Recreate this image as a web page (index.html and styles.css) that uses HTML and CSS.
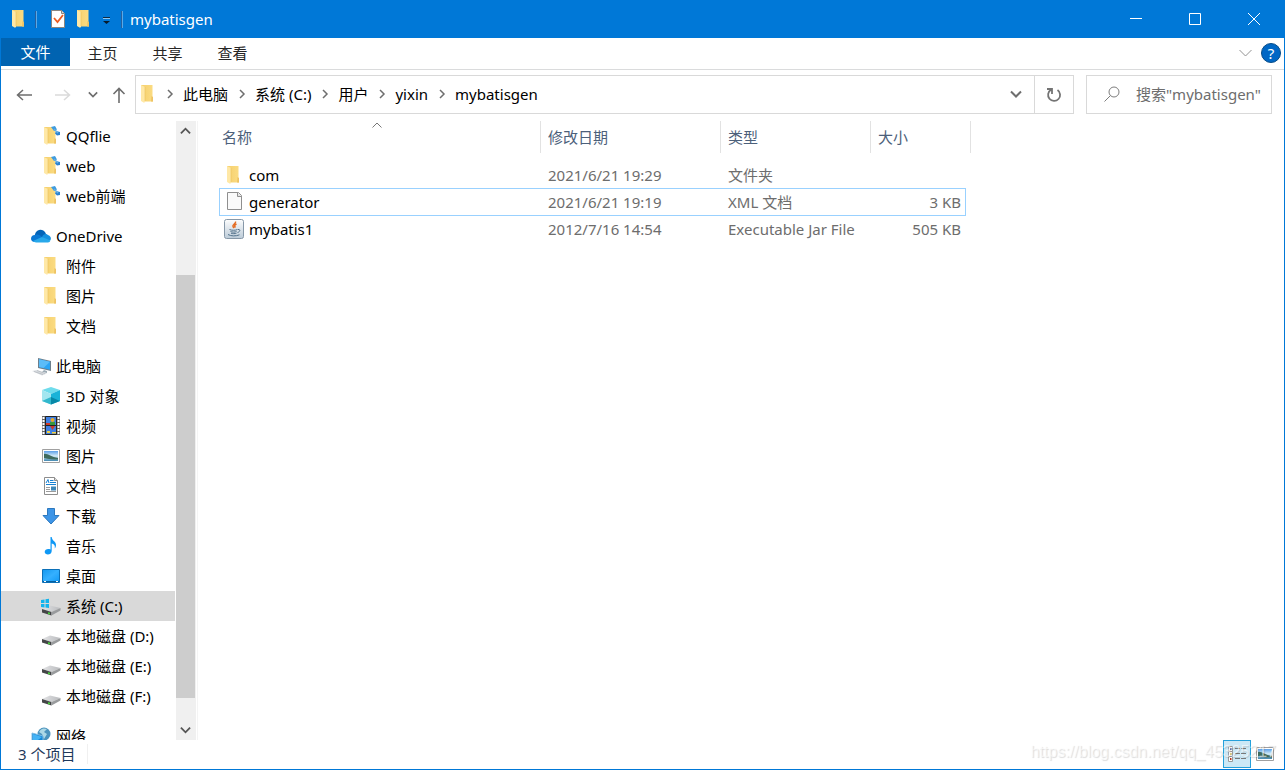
FILE: index.html
```
<!DOCTYPE html>
<html lang="zh-CN">
<head>
<meta charset="utf-8">
<title>mybatisgen</title>
<link rel="stylesheet" href="styles.css">
</head>
<body>
<svg class="sprite" width="0" height="0" aria-hidden="true">
  <defs>
    <linearGradient id="gold" x1="0" x2="1"><stop offset="0" stop-color="#f5cf6c"/><stop offset="1" stop-color="#fbdc83"/></linearGradient>
    <linearGradient id="sea" x1="0" y1="0" x2="0" y2="1"><stop offset="0" stop-color="#5b9fe8"/><stop offset=".5" stop-color="#d5ecf7"/><stop offset="1" stop-color="#3f86b0"/></linearGradient>
    <linearGradient id="drv" x1="0" x2="1"><stop offset="0" stop-color="#e4e4e6"/><stop offset="1" stop-color="#b9bbbe"/></linearGradient>
    <linearGradient id="scr" x1="0" y1="0" x2="1" y2="1"><stop offset="0" stop-color="#1297ee"/><stop offset=".5" stop-color="#35b0ff"/><stop offset="1" stop-color="#0f98f5"/></linearGradient>
    <linearGradient id="jarbg" x1="0" y1="0" x2="0" y2="1"><stop offset="0" stop-color="#fdfdfd"/><stop offset="1" stop-color="#bccbd8"/></linearGradient>
  </defs>
  <symbol id="folder" viewBox="0 0 20 20">
    <path d="M3 1h11.500v12l.5 1v3.500H6z" fill="url(#gold)"/><path d="M13.500 12l1.500 1v4.500h-2z" fill="#eec364"/>
    <path d="M3 1l4 2v15l-1 .800L3 17z" fill="#ffe8a6"/><path d="M7 3v14" stroke="#e9bf5c" stroke-width=".6"/>
  </symbol>
  <symbol id="synced" viewBox="0 0 20 20">
    <use href="#folder"/>
    <path d="M10 1l4-1 2 3.500-3 1.500z" fill="#3d9be0"/><path d="M15 5l4 1v3l-3 .500-2-2z" fill="#2c82cf"/><path d="M13 3l4 4" stroke="#67aee4" stroke-width="1.500"/>
  </symbol>
  <symbol id="cloud" viewBox="0 0 20 20">
    <path d="M4 11a5.500 5.500 0 0 1 11-3l3 4-9 3z" fill="#0364b8"/>
    <path d="M0 13a4 4 0 0 1 4-4c3-1 5 0 7 2l-3 5H4a4 3.500 0 0 1-4-3z" fill="#0a78d4"/>
    <path d="M11 11c1-3 4-4 6-2a3.500 3.500 0 0 1 2.500 5l-4 1z" fill="#1490df"/>
    <path d="M2 15l9-4 8.500 3.500A3 3 0 0 1 17 16.500H5a4 4 0 0 1-3-1.500z" fill="#28a8ea"/>
  </symbol>
  <symbol id="pc" viewBox="0 0 20 20">
    <path d="M7 2l13 3v10L7 12z" fill="#6d7f8c"/><path d="M8 3.300l11 2.500v7.900L8 11z" fill="#2ba4f4"/><path d="M8 3.300l11 2.500-6.500 6.300L8 11z" fill="#5bbcf8"/>
    <path d="M13 14l3 1v2l-5-1z" fill="#9dabb5"/><path d="M1 15l5-1 10 3.500-5 2z" fill="#d9dde1"/><path d="M3 15.500l9 3M6 14.500l8 3" stroke="#a7adb3" stroke-width=".6"/>
  </symbol>
  <symbol id="cube" viewBox="0 0 20 20">
    <path d="M1 4l9-3 9 3-9 4z" fill="#6fdcec"/><path d="M1 4l9 4v10.500l-9-3.500z" fill="#a3e6ef"/><path d="M10 8l9-4v11l-9 3.500z" fill="#1ab3d8"/><path d="M1 15l9-4v7.500z" fill="#32b8cd"/><path d="M10 11l9 4-9 3.500z" fill="#0788a7"/>
  </symbol>
  <symbol id="film" viewBox="0 0 20 20">
    <path d="M1 0h18v19H1z" fill="#666"/><path d="M4.500.5h11v9h-11zM4.500 9.500h11v9h-11z" fill="#3f80e2" stroke="#222"/>
    <path d="M2.500 1v18M17.500 1v18" stroke="#fff" stroke-width="2" stroke-dasharray="2 1"/>
    <path d="M5 7h5v2H5z" fill="#d33a25"/><circle cx="11.500" cy="4" r="2" fill="#e8a82b"/><path d="M9 6h5v3H9z" fill="#38983c"/><path d="M9 10h5l-2.500 4z" fill="#c9392b"/><path d="M6 15h3v2H6zM11 16h4v1.500h-4z" fill="#f2ce40"/>
  </symbol>
  <symbol id="photo" viewBox="0 0 20 20">
    <path d="M1.500 3.500h17v13h-17z" fill="#fff" stroke="#a0a0a0"/><path d="M3 5h14v10H3z" fill="url(#sea)"/><path d="M3 8c3-1 7 3 14 4v1.500c-5 0-9-.5-14-1.500z" fill="#3f6b5e"/>
  </symbol>
  <symbol id="doc" viewBox="0 0 20 20">
    <path d="M3.500 1.500h10l3 3v14h-13z" fill="#fff" stroke="#8d8d8d"/><path d="M13.500 1.500v3h3" fill="#ddd" stroke="#8d8d8d"/>
    <path d="M5 7l2-3.500L8 7M9 4.500h3.500M9 6.500h6M5 8.500h10" stroke="#1781d3" fill="none"/><path d="M5 11.500h4M5 13.500h4M5 15.500h10" stroke="#9b9b9b"/><path d="M10 10.500h5v4h-5z" fill="#3f87b7"/>
  </symbol>
  <symbol id="down" viewBox="0 0 20 20"><path d="M6.500 2.500h7v7h4.500L10 18 2 9.500h4.500z" fill="#3d95e7" stroke="#2c78be"/></symbol>
  <symbol id="music" viewBox="0 0 20 20"><path d="M9.500 1h1.200c.3 4 4.800 4.500 4.300 8.500-.2 1.500-.8 2.500-1.300 3 .8-3-.8-4.500-3-5V15c0 4.500-7 4.500-7 1 0-2.500 3-3.500 5.800-2.500z" fill="#0f98f5"/></symbol>
  <symbol id="desk" viewBox="0 0 20 20"><path d="M1.500 3.500h17v13h-17z" fill="url(#scr)" stroke="#0c70b8"/><path d="M2 15.500h16" stroke="#05609f"/><path d="M3 15.500h2M15 15.500h2" stroke="#fff"/></symbol>
  <symbol id="drive" viewBox="0 0 20 20">
    <path d="M1 13l8-3.500L19.500 12l-9 4z" fill="url(#drv)"/><path d="M1 13l9.500 3v3.500L1 16.500z" fill="#454648"/><path d="M10.500 16l9-4v2.500l-9 5z" fill="#999b9d"/><path d="M7 16.200l2 .6v1.700l-2-.6z" fill="#48d53b"/>
  </symbol>
  <symbol id="sysdrive" viewBox="0 0 20 20"><use href="#drive"/><path d="M0 4l3.500-.5V7H0zM4.500 3.300L8 2.800V7H4.500zM0 8h3.500v3.500L0 11zM4.500 8H8v4l-3.500-.5z" fill="#12b4ed"/></symbol>
  <symbol id="net" viewBox="0 0 20 20">
    <circle cx="13" cy="8" r="6.500" fill="#4b93bd"/><path d="M8 6c3-5 6-3 8-3l-3 3 3 2-3 5-2-5z" fill="#acd8e6"/>
    <path d="M1 7l11 3v9L1 16z" fill="#1688d6" stroke="#7cbbe4"/><path d="M2 8l9 3-7 5-2-.500z" fill="#45b3f5"/>
  </symbol>
  <symbol id="blank" viewBox="0 0 20 20"><path d="M3.500.5h11l3 3v14h-14z" fill="#fafafa" stroke="#8f8f8f"/><path d="M13.500.5v4h4" fill="#e4e4e4" stroke="#8f8f8f"/></symbol>
  <symbol id="jar" viewBox="0 0 20 20">
    <rect x=".5" y=".5" width="19" height="19" rx="2" fill="url(#jarbg)" stroke="#8798a8"/>
    <path d="M11.500 2.500c1 2-3.500 3-2.500 5l1 1.500M12.500 5c-2 1-2.500 2-1 3.500" fill="none" stroke="#e46c22" stroke-width="1.500"/>
    <path d="M5.500 10.500c2 1 6 1 8 0M6.500 12.500c1.500.8 4.500.8 6 0M7 14.200c1.500.6 4 .6 5.500 0M4 15.500c3 1.800 8 1.800 11.500.3M14 10.500c3-.5 2 2.500-.5 3" fill="none" stroke="#54738c"/>
  </symbol>
  <symbol id="chev-r" viewBox="0 0 8 10"><path d="M2 1l4 4-4 4" fill="none" stroke="currentColor" stroke-width="1.500"/></symbol>
  <symbol id="chev-d" viewBox="0 0 12 8"><path d="M1 1.500l5 5 5-5" fill="none" stroke="currentColor" stroke-width="2"/></symbol>
</svg>

<div class="window">
  <header class="titlebar">
    <svg class="icon"><use href="#folder"/></svg>
    <span class="divider"></span>
    <button class="quick first" aria-label="属性"><svg class="icon" viewBox="0 0 20 20"><path d="M3.500 1.500h10l3 3v14h-13z" fill="#fff" stroke="#8b8580"/><path d="M13.500 1.500v3h3" fill="#ddd" stroke="#8b8580"/><path d="M6 9l3.500 4 5.500-7" fill="none" stroke="#ee5b20" stroke-width="1.800"/></svg></button>
    <button class="quick" aria-label="新建文件夹"><svg class="icon"><use href="#folder"/></svg></button>
    <button class="quick more" aria-label="自定义快速访问工具栏"><svg width="9" height="8" viewBox="0 0 9 8"><path d="M1 .5h7" stroke="#102a40"/><path d="M1 1.500h7" stroke="#8fc5f0"/><path d="M1 4h7L4.500 7z" fill="#071a2a"/></svg></button>
    <span class="divider"></span>
    <h1 class="title">mybatisgen</h1>
    <div class="controls">
      <button aria-label="最小化"><svg width="12" height="12"><path d="M0 5.500h12" stroke="#fff"/></svg></button>
      <button aria-label="最大化"><svg width="12" height="12"><path d="M.5.5h11v11H.5z" fill="none" stroke="#fff"/></svg></button>
      <button aria-label="关闭"><svg width="12" height="12"><path d="M0 0l12 12M12 0L0 12" stroke="#fff"/></svg></button>
    </div>
  </header>

  <div class="ribbon">
    <button class="tab file">文件</button>
    <button class="tab">主页</button>
    <button class="tab">共享</button>
    <button class="tab">查看</button>
    <button class="expand" aria-label="展开功能区"><svg width="13" height="8"><path d="M.5 1l6 6 6-6" fill="none" stroke="#929292"/></svg></button>
    <button class="help" aria-label="帮助">?</button>
  </div>

  <div class="toolbar">
    <button class="move" aria-label="后退"><svg width="16" height="12"><path d="M7 1L1.500 6 7 11M2 6h14" fill="none" stroke="#6e6e6e" stroke-width="1.500"/></svg></button>
    <button class="move" aria-label="前进"><svg width="16" height="12"><path d="M9 1l5.500 5L9 11M14 6H0" fill="none" stroke="#dadada" stroke-width="1.500"/></svg></button>
    <button class="recent" aria-label="最近浏览的位置"><svg width="10" height="7"><use href="#chev-d"/></svg></button>
    <button class="up" aria-label="上移"><svg width="14" height="16"><path d="M1.500 7L7 1.500 12.500 7M7 2v14" fill="none" stroke="#6e6e6e" stroke-width="1.600"/></svg></button>
    <div class="address">
      <svg class="icon"><use href="#folder"/></svg>
      <svg class="sep first"><use href="#chev-r"/></svg><button>此电脑</button>
      <svg class="sep"><use href="#chev-r"/></svg><button>系统 (C:)</button>
      <svg class="sep"><use href="#chev-r"/></svg><button>用户</button>
      <svg class="sep"><use href="#chev-r"/></svg><button>yixin</button>
      <svg class="sep"><use href="#chev-r"/></svg><button>mybatisgen</button>
      <button class="drop" aria-label="以前的位置"><svg width="12" height="8"><use href="#chev-d"/></svg></button>
      <button class="refresh" aria-label="刷新"><svg width="16" height="16"><path d="M5 2.800A6 6 0 1 0 11.500 3M1 2h5v5" fill="none" stroke="#747474" stroke-width="1.800"/></svg></button>
    </div>
    <label class="search">
      <svg width="16" height="16"><circle cx="10" cy="6" r="5" fill="none" stroke="#7d7d7d"/><path d="M6.500 9.500L.5 15.500" stroke="#7d7d7d"/></svg>
      <input type="text" aria-label="搜索" placeholder='搜索"mybatisgen"'>
    </label>
  </div>

  <div class="body">
    <nav class="tree">
      <ul>
        <li><a href="#"><svg class="icon"><use href="#synced"/></svg>QQflie</a></li>
        <li><a href="#"><svg class="icon"><use href="#synced"/></svg>web</a></li>
        <li><a href="#"><svg class="icon"><use href="#synced"/></svg>web前端</a></li>
      </ul>
      <ul>
        <li><a href="#" class="root"><svg class="icon"><use href="#cloud"/></svg>OneDrive</a></li>
        <li><a href="#"><svg class="icon"><use href="#folder"/></svg>附件</a></li>
        <li><a href="#"><svg class="icon"><use href="#folder"/></svg>图片</a></li>
        <li><a href="#"><svg class="icon"><use href="#folder"/></svg>文档</a></li>
      </ul>
      <ul>
        <li><a href="#" class="root"><svg class="icon"><use href="#pc"/></svg>此电脑</a></li>
        <li><a href="#"><svg class="icon"><use href="#cube"/></svg>3D 对象</a></li>
        <li><a href="#"><svg class="icon"><use href="#film"/></svg>视频</a></li>
        <li><a href="#"><svg class="icon"><use href="#photo"/></svg>图片</a></li>
        <li><a href="#"><svg class="icon"><use href="#doc"/></svg>文档</a></li>
        <li><a href="#"><svg class="icon"><use href="#down"/></svg>下载</a></li>
        <li><a href="#"><svg class="icon"><use href="#music"/></svg>音乐</a></li>
        <li><a href="#"><svg class="icon"><use href="#desk"/></svg>桌面</a></li>
        <li><a href="#" class="current"><svg class="icon"><use href="#sysdrive"/></svg>系统 (C:)</a></li>
        <li><a href="#"><svg class="icon"><use href="#drive"/></svg>本地磁盘 (D:)</a></li>
        <li><a href="#"><svg class="icon"><use href="#drive"/></svg>本地磁盘 (E:)</a></li>
        <li><a href="#"><svg class="icon"><use href="#drive"/></svg>本地磁盘 (F:)</a></li>
      </ul>
      <ul>
        <li><a href="#" class="root"><svg class="icon"><use href="#net"/></svg>网络</a></li>
      </ul>
    </nav>
    <div class="scrollbar">
      <button aria-label="向上滚动"><svg class="flip" width="11" height="8"><use href="#chev-d"/></svg></button>
      <div class="track"><div class="thumb"></div></div>
      <button aria-label="向下滚动"><svg width="11" height="8"><use href="#chev-d"/></svg></button>
    </div>
    <main class="files">
      <table>
        <colgroup><col class="c-name"><col class="c-date"><col class="c-type"><col class="c-size"><col class="c-end"></colgroup>
        <thead>
          <tr>
            <th class="sorted">名称<svg class="sort" width="10" height="6"><path d="M.5 5.500L5 1l4.500 4.500" fill="none" stroke="#777"/></svg></th>
            <th>修改日期</th><th>类型</th><th colspan="2">大小</th>
          </tr>
        </thead>
        <tbody>
          <tr><td><span class="name"><svg class="icon"><use href="#folder"/></svg>com</span></td><td>2021/6/21 19:29</td><td>文件夹</td><td></td></tr>
          <tr class="focused"><td><span class="name"><svg class="icon"><use href="#blank"/></svg>generator</span></td><td>2021/6/21 19:19</td><td>XML 文档</td><td>3 KB</td></tr>
          <tr class="plain"><td><span class="name"><svg class="icon"><use href="#jar"/></svg>mybatis1</span></td><td>2012/7/16 14:54</td><td>Executable Jar File</td><td>505 KB</td></tr>
        </tbody>
      </table>
    </main>
  </div>

  <footer class="status">
    <span class="count">3 个项目</span>
    <button class="view on" aria-label="详细信息"><svg width="20" height="20" viewBox="0 0 20 20"><path d="M1.500 2.500h4v5h-4zM1.500 7.500h4v5h-4zM1.500 12.500h4v5h-4z" fill="#fff" stroke="#999"/><path d="M3 4h1.500v2H3z" fill="#346bb5"/><path d="M3 9h1.500v2H3z" fill="#c8b75a"/><path d="M3 14h1.500v2H3z" fill="#b93920"/><path d="M8 4.500h5M14 4.500h5M8 9.500h5M14 9.500h5M8 14.500h5M14 14.500h5" stroke="#7a7a7a"/></svg></button>
    <button class="view" aria-label="大图标"><svg class="icon"><use href="#photo"/></svg></button>
    <span class="watermark">https://blog.csdn.net/qq_45325217</span>
  </footer>
</div>
</body>
</html>
```
FILE: styles.css
```
* { box-sizing: border-box; }
body {
  margin: 0;
  font: 15px/20px "Noto Sans", "Noto Sans CJK SC", sans-serif;
  color: #000;
  background: #fff;
}
button, input { font: inherit; color: inherit; border: 0; padding: 0; margin: 0; background: none; }
button { display: flex; align-items: center; justify-content: center; }
ul { list-style: none; margin: 0; padding: 0; }
svg { flex: none; display: block; }
.sprite { position: absolute; }
.icon { width: 20px; height: 20px; }

.window {
  height: 100vh;
  display: flex;
  flex-direction: column;
  border: 1px solid #0078d7;
  border-top: 0;
  overflow: hidden;
}

.titlebar {
  flex: none;
  height: 38px;
  display: flex;
  align-items: center;
  padding-left: 8px;
  background: #0078d7;
  color: #fff;
}
.divider { width: 2px; height: 17px; margin: 0 6px; background: #2560a0; border-right: 1px solid #5ba9e6; }
.quick { width: 26px; height: 26px; }
.quick.first { margin-left: 2px; }
.quick.more { width: 18px; padding-top: 4px; }
.title { margin: 0 0 0 1px; font-size: 15px; font-weight: 400; }
.controls { margin-left: auto; display: flex; align-self: stretch; }
.controls button { width: 59px; }
.controls button:last-child { width: 60px; }

.ribbon {
  flex: none;
  height: 32px;
  display: flex;
  border-bottom: 1px solid #dadbdc;
  color: #262626;
}
.tab { width: 65px; height: 30px; }
.tab.file { width: 69px; height: 28px; background: #0063b1; color: #fff; }
.expand { margin-left: auto; width: 30px; height: 30px; }
.help {
  width: 20px;
  height: 20px;
  margin: 5px 3px 0 1px;
  border: 1px solid #064c88;
  border-radius: 50%;
  background: #0067c5;
  color: #fff;
}

.toolbar { flex: none; display: flex; height: 44px; padding: 5px 12px 0 3px; color: #6e6e6e; }
.toolbar > button { height: 39px; }
.move { width: 39px; }
.recent { width: 21px; }
.up { width: 32px; }
.address {
  flex: 1;
  display: flex;
  align-items: center;
  height: 39px;
  padding: 0 0 2px 2px;
  border: 1px solid #d9d9d9;
}
.address button { color: #000; }
.sep { width: 8px; height: 10px; margin: 0 9px 0 10px; }
.sep.first { margin-left: 8px; }
.address .drop { margin-left: auto; width: 36px; color: #6e6e6e; }
.address .refresh { width: 39px; height: 37px; margin-bottom: -2px; border-left: 1px solid #d9d9d9; }
.search {
  width: 186px;
  height: 39px;
  margin-left: 12px;
  padding: 0 0 2px 17px;
  display: flex;
  align-items: center;
  gap: 16px;
  border: 1px solid #d9d9d9;
}
.search input { flex: 1; min-width: 0; outline: 0; }
.search input::placeholder { color: #6d6d6d; opacity: 1; }

.body { flex: 1; min-height: 0; display: flex; padding-top: 7px; }
.tree { width: 175px; overflow: hidden; }
.tree ul { margin-bottom: 10px; }
.tree a {
  display: flex;
  align-items: center;
  gap: 5px;
  height: 30px;
  margin-right: 1px;
  padding-left: 40px;
  color: #000;
  text-decoration: none;
  white-space: nowrap;
}
.tree a.root { padding-left: 30px; }
.tree a.current { background: #d9d9d9; }
.scrollbar { width: 20px; display: flex; flex-direction: column; background: #f0f0f0; color: #555; }
.scrollbar button { height: 20px; padding-right: 1px; }
.flip { transform: rotate(180deg); }
.track { flex: 1; display: flex; flex-direction: column; justify-content: flex-end; padding: 0 1px 22px 0; }
.thumb { height: 76%; background: #cdcdcd; }

.files { flex: 1; margin-left: 1px; padding-left: 21px; border-left: 1px solid #f4f4f4; }
.files table { table-layout: fixed; width: 752px; border-collapse: separate; border-spacing: 0; }
.c-name { width: 322px; }
.c-date { width: 180px; }
.c-type { width: 150px; }
.c-size { width: 95px; }
.c-end { width: 5px; }
.files th {
  height: 32px;
  padding: 0 7px;
  text-align: left;
  font-weight: 400;
  color: #4c607a;
  border-right: 1px solid #e2e2e2;
}
.files th:first-child { padding-left: 3px; }
.sorted { position: relative; }
.sort { position: absolute; left: 153px; top: 1px; }
.files tbody::before { content: ""; display: block; height: 8px; }
.files td { height: 27px; padding: 0 7px; color: #6d6d6d; border: 1px solid transparent; border-width: 1px 0; white-space: nowrap; }
.files td:first-child { padding-left: 4px; border-left-width: 1px; }
.files td:last-child { padding-right: 4px; border-right-width: 1px; text-align: right; }
.files .focused td { height: 28px; border-color: #99d1ff; }
.files .plain td { border-top-width: 0; }
.name { display: flex; align-items: center; gap: 5px; color: #000; }

.status { flex: none; position: relative; display: flex; height: 29px; padding: 0 5px 0 17px; color: #1e395b; }
.count { align-self: flex-start; margin-top: 4px; padding-right: 12px; border-right: 1px solid #f0f0f0; }
.view { width: 28px; height: 28px; }
.view.on { margin-left: auto; background: #cce8f6; border: 1px solid #26a0da; }
.watermark {
  position: absolute;
  right: 8px;
  top: 2px;
  font: 16px/20px "Liberation Sans", sans-serif;
  color: rgba(255, 255, 255, .6);
  text-shadow: 1px 1px 1px rgba(0, 0, 0, .14);
  pointer-events: none;
}
```
